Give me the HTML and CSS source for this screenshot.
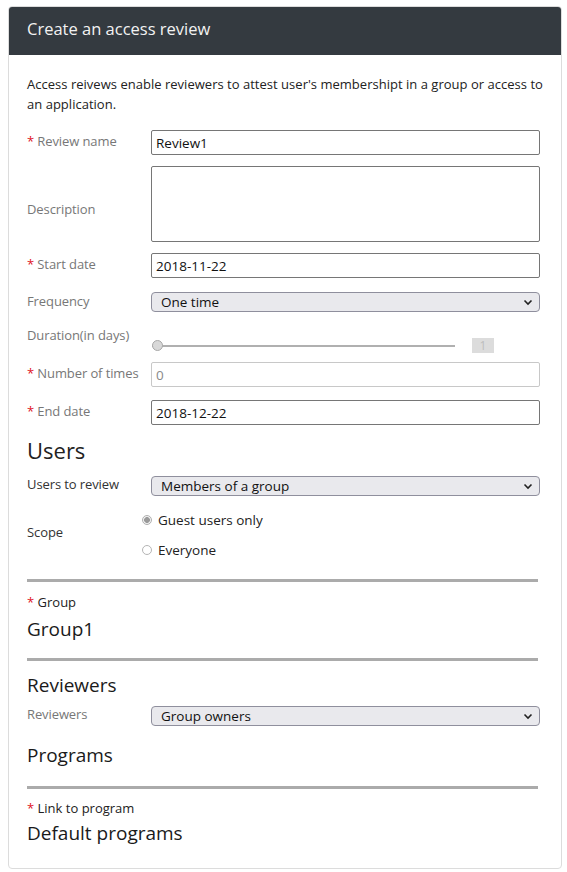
FILE: index.html
```html
<!DOCTYPE html>
<html>
<head>
<meta charset="utf-8">
<link rel="stylesheet" href="styles.css">
</head>
<body>
<div class="card">
  <div class="card-header">Create an access review</div>
  <div class="card-body">
    <p class="intro">Access reivews enable reviewers to attest user's membershipt in a group or access to an application.</p>

    <div class="row r-name">
      <label class="lbl"><span class="req">*</span> Review name</label>
      <input class="txt" type="text" value="Review1">
    </div>
    <div class="row r-desc">
      <label class="lbl">Description</label>
      <textarea class="area"></textarea>
    </div>
    <div class="row r-start">
      <label class="lbl"><span class="req">*</span> Start date</label>
      <input class="txt" type="text" value="2018-11-22">
    </div>
    <div class="row r-freq">
      <label class="lbl">Frequency</label>
      <div class="sel">
        <span class="sel-text">One time</span>
        <svg class="chev" width="10" height="7" viewBox="0 0 10 7"><path d="M1.5 1.5 L5 5 L8.5 1.5" fill="none" stroke="#222" stroke-width="1.6"/></svg>
      </div>
    </div>
    <div class="row r-dur">
      <label class="lbl">Duration(in days)</label>
      <div class="slider-wrap">
        <div class="track"><span class="thumb"></span></div>
        <span class="valbox">1</span>
      </div>
    </div>
    <div class="row r-num">
      <label class="lbl"><span class="req">*</span> Number of times</label>
      <input class="txt disabled" type="text" value="0" disabled>
    </div>
    <div class="row r-end">
      <label class="lbl"><span class="req">*</span> End date</label>
      <input class="txt" type="text" value="2018-12-22">
    </div>

    <h2 class="h-users">Users</h2>
    <div class="row r-utr">
      <label class="lbl dark">Users to review</label>
      <div class="sel">
        <span class="sel-text">Members of a group</span>
        <svg class="chev" width="10" height="7" viewBox="0 0 10 7"><path d="M1.5 1.5 L5 5 L8.5 1.5" fill="none" stroke="#222" stroke-width="1.6"/></svg>
      </div>
    </div>
    <div class="row r-scope">
      <label class="lbl dark">Scope</label>
      <div class="radios">
        <div class="radio"><span class="dot on"></span>Guest users only</div>
        <div class="radio"><span class="dot"></span>Everyone</div>
      </div>
    </div>

    <hr class="rule">
    <div class="small-lbl"><span class="req">*</span> Group</div>
    <div class="value v-group">Group1</div>
    <hr class="rule">

    <h3 class="h-sec">Reviewers</h3>
    <div class="row r-rev">
      <label class="lbl">Reviewers</label>
      <div class="sel">
        <span class="sel-text">Group owners</span>
        <svg class="chev" width="10" height="7" viewBox="0 0 10 7"><path d="M1.5 1.5 L5 5 L8.5 1.5" fill="none" stroke="#222" stroke-width="1.6"/></svg>
      </div>
    </div>
    <h3 class="h-sec h-prog">Programs</h3>
    <hr class="rule">
    <div class="small-lbl l-link"><span class="req">*</span> Link to program</div>
    <div class="value v-prog">Default programs</div>
  </div>
</div>
</body>
</html>
```
FILE: styles.css
```css
* { box-sizing: border-box; }
html, body { margin: 0; padding: 0; background: #fff; }
body {
  padding: 6px 5px 0 8px;
  font-family: "Open Sans", "Noto Sans", sans-serif;
  color: #212529;
}
.card {
  width: 554px;
  height: 863px;
  border: 1px solid #dcdcdc;
  border-radius: 4px;
  overflow: hidden;
}
.card-header {
  background: #343a40;
  color: #f2f2f2;
  height: 48px;
  padding: 0 18px 5px 18px;
  display: flex;
  align-items: center;
  font-size: 16.5px;
}
.card-body {
  padding: 19px 21px 0 18px;
}
.intro {
  margin: 0 -8px 16px 0;
  font-size: 13px;
  line-height: 20px;
  color: #222;
  letter-spacing: 0.02px;
}
.row {
  display: flex;
  align-items: center;
}
.lbl {
  width: 124px;
  flex: none;
  font-size: 13px;
  color: #777;
  letter-spacing: -0.1px;
}
.lbl.dark { color: #333; }
.req { color: #e0141e; }
.txt {
  width: 389px;
  height: 25px;
  border: 1px solid #767676;
  border-radius: 2px;
  padding: 0 4px;
  font-family: inherit;
  font-size: 13.5px;
  color: #111;
  background: #fff;
  outline: none;
}
.txt.disabled {
  border-color: #c8c8c8;
  color: #8a8a8a;
  background: #fff;
}
.area {
  width: 389px;
  height: 76px;
  border: 1px solid #767676;
  border-radius: 2px;
  resize: none;
  display: block;
}
.r-name { margin-bottom: 11px; }
.r-name .lbl { margin-top: -3px; }
.r-desc { margin-bottom: 11px; }
.r-desc .lbl { margin-top: 10px; }
.r-start { margin-bottom: 14px; }
.r-start .lbl { margin-top: -4px; }
.r-freq { margin-bottom: 16px; }
.r-freq .lbl { margin-top: -2px; }
.r-num { margin-bottom: 13px; }
.r-end .lbl { margin-top: -3px; }
.r-num .lbl { margin-top: -3px; }
.sel {
  position: relative;
  width: 389px;
  height: 20px;
  border: 1px solid #8f8f9d;
  border-radius: 4px;
  background: #e9e9ed;
  padding-left: 9px;
  font-size: 13.5px;
  line-height: 18px;
  color: #111;
}
.chev {
  position: absolute;
  right: 6px;
  top: 6px;
}
.r-dur {
  height: 25px;
  margin-bottom: 9px;
  align-items: flex-start;
}
.r-dur .lbl { margin-top: -2px; }
.slider-wrap {
  display: flex;
  align-items: center;
  margin-top: 10px;
  padding-left: 1px;
}
.track {
  position: relative;
  width: 303px;
  height: 2px;
  background: #b0b0b0;
}
.thumb {
  position: absolute;
  left: 0;
  top: -5px;
  width: 11px;
  height: 11px;
  border-radius: 50%;
  background: #d8d8d8;
  border: 1px solid #a8a8a8;
}
.valbox {
  margin-left: 17px;
  width: 22px;
  height: 15px;
  background: #dcdcdc;
  color: #bdbdbd;
  font-size: 12px;
  line-height: 15px;
  text-align: center;
}
.h-users {
  margin: 10px 0 11px 0;
  font-size: 22px;
  font-weight: 400;
  line-height: 30px;
  color: #222;
}
.r-utr { margin-bottom: 14px; }
.r-utr .lbl { margin-top: -5px; }
.r-scope .lbl { margin-top: -6px; }
.radios {
  margin-left: -9px;
  display: flex;
  flex-direction: column;
  gap: 10px;
}
.radio {
  display: flex;
  align-items: center;
  font-size: 13.5px;
  line-height: 20px;
  color: #222;
}
.dot {
  width: 10px;
  height: 10px;
  border-radius: 50%;
  border: 1px solid #b5b5b5;
  margin-right: 6px;
  background: #fff;
  position: relative;
}
.dot.on {
  border-color: #b0b0b0;
  background: radial-gradient(circle, #9a9a9a 0 2.6px, #f2f2f2 3.2px);
}
.rule {
  border: 0;
  height: 3px;
  background: #ababab;
  width: 511px;
  margin: 0;
}
.r-scope + .rule { margin-top: 19px; }
.small-lbl {
  font-size: 13px;
  color: #222;
  margin-top: 11px;
  line-height: 18px;
}
.value {
  font-size: 19px;
  line-height: 26px;
  color: #1a1a1a;
}
.v-group { margin-top: 5px; }
.v-prog { margin-top: 3px; }
.v-group + .rule { margin-top: 16px; }
.h-sec {
  margin: 11px 0 8px 0;
  font-size: 19px;
  font-weight: 400;
  line-height: 26px;
  color: #1a1a1a;
}
.r-rev .lbl { margin-top: -5px; }
.h-prog { margin-top: 16px; margin-bottom: 18px; }
.l-link { margin-top: 10px; }
```
